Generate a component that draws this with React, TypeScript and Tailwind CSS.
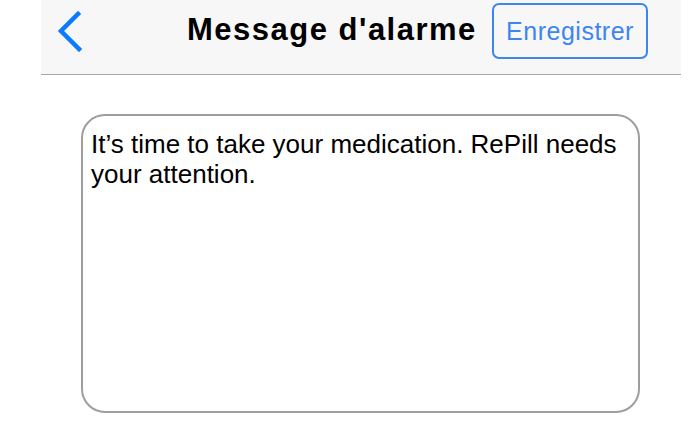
export default function App() {
  return (
    <div className="w-[700px] h-[438px] bg-white overflow-hidden" style={{ fontFamily: '"Liberation Sans", Arial, sans-serif' }}>
      <header className="ml-[41px] w-[640px] h-[75px] bg-[#f7f7f7] border-b border-[#a8a8a8] flex items-start relative">
        <button className="ml-[15px] mt-[10px] w-[30px] h-[42px] flex items-center">
          <svg width="28" height="42" viewBox="0 0 28 42">
            <path d="M22 4 L5 21 L23 39" fill="none" stroke="#0a7aff" strokeWidth="4.5" strokeLinecap="square" />
          </svg>
        </button>
        <h1 className="ml-[101px] mt-[10px] text-[31px] font-bold text-black leading-[40px] tracking-[1.5px] whitespace-nowrap">Message d'alarme</h1>
        <button className="absolute left-[451px] top-[3px] w-[156px] h-[56px] border-2 border-[#3d86f0] rounded-[7px] text-[25px] text-[#3d86f0] leading-none tracking-[0.5px]">
          Enregistrer
        </button>
      </header>
      <div className="ml-[81px] mt-[39px] w-[559px] h-[299px] border-2 border-[#9e9e9e] rounded-[24px] pl-[8px] pr-[2px] pt-[13px] text-[26px] leading-[30px] text-black">
        It’s time to take your medication. RePill needs your attention.
      </div>
    </div>
  );
}
